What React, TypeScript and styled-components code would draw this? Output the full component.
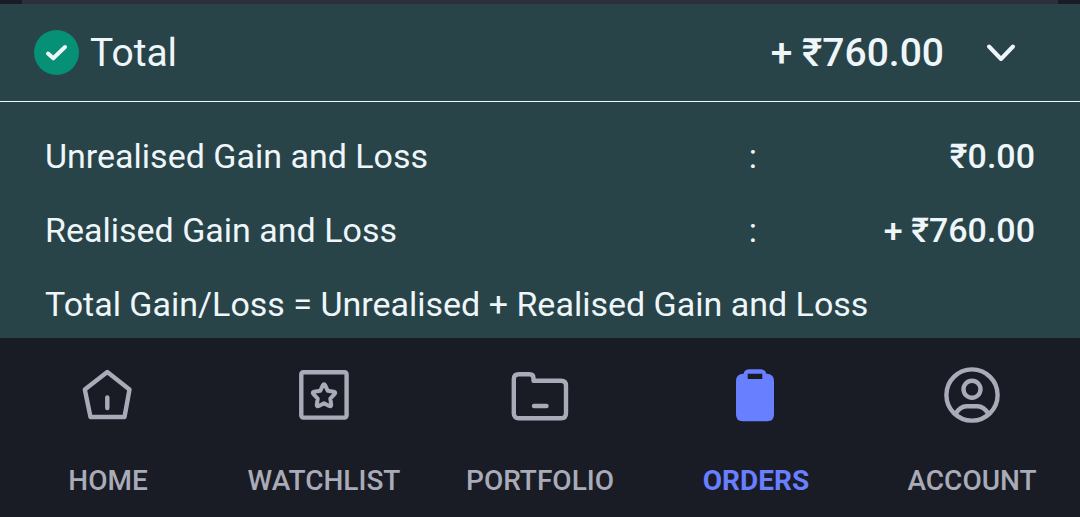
import React from "react";
import styled, { createGlobalStyle } from "styled-components";

const GlobalStyle = createGlobalStyle`
  *, *::before, *::after { box-sizing: border-box; }
  body {
    margin: 0;
    background: #191b25;
    font-family: Roboto, "Noto Sans", sans-serif;
    color: #eef6fa;
  }
`;

const Screen = styled.div`
  display: flex;
  flex-direction: column;
  min-height: 100vh;
`;

const CardEdge = styled.div`
  height: 4px;
  margin: 0 22px;
  background: #2d303c;
`;

const Summary = styled.section`
  background: #284448;
`;

const SummaryToggle = styled.button`
  display: flex;
  align-items: center;
  width: 100%;
  height: 98px;
  padding: 0 62px 0 34px;
  border: 0;
  border-bottom: 1px solid #eef6fa;
  background: transparent;
  color: inherit;
  font: inherit;
  font-size: 39px;
  line-height: 48px;
  text-align: left;
`;

const SummaryTitle = styled.span`
  flex: 1;
  margin-left: 11px;
`;

const SummaryAmount = styled.span`
  margin-right: 40px;
  font-weight: 500;
`;

const Breakdown = styled.div`
  padding: 17px 45px 0;
  height: 236px;
  font-size: 34px;
  line-height: 74px;
`;

const BreakdownList = styled.dl`
  margin: 0;
`;

const BreakdownRow = styled.div`
  display: grid;
  grid-template-columns: 1fr 278px;
`;

const Term = styled.dt`
  display: flex;
  justify-content: space-between;

  &::after { content: ":"; }
`;

const Amount = styled.dd`
  margin: 0;
  text-align: right;
  font-weight: 500;
`;

const Formula = styled.p`
  margin: 0;
`;

const TabBar = styled.nav`
  display: grid;
  grid-template-columns: repeat(5, 1fr);
  flex: 1;
  padding: 25px 0 19px;
  background: #191b25;
`;

const Tab = styled.a<{ $active?: boolean }>`
  display: flex;
  flex-direction: column;
  align-items: center;
  gap: 38px;
  color: ${(p) => (p.$active ? "#687fff" : "#a9acb8")};
  font-size: 28px;
  font-weight: ${(p) => (p.$active ? 700 : 500)};
  line-height: 32px;
  text-decoration: none;
`;

const TabIcon = styled.svg`
  display: block;
  width: 64px;
  height: 64px;
  fill: none;
  stroke: currentColor;
  stroke-width: 4.4;
  stroke-linecap: round;
  stroke-linejoin: round;
`;

const icons = {
  home: (
    <>
      <path d="M31.3 9 53.5 26.5 48.5 54h-34L8.8 26.5Z" />
      <path d="M31.3 34.5v10.5" />
    </>
  ),
  watchlist: (
    <>
      <rect x="9.3" y="9.3" width="45.3" height="45.3" rx="2" />
      <path
        strokeWidth="4"
        d="M30.8 22.3Q32 20.2 33.2 22.3L35.8 27.8 41.8 28.8Q44.2 29.3 42.5 31.2L38.3 35.6 39.2 41.6Q39.3 44 37.2 43L32 40.2 26.8 43Q24.7 44 24.8 41.6L25.7 35.6 21.5 31.2Q19.8 29.3 22.2 28.8L28.2 27.8Z"
      />
    </>
  ),
  portfolio: (
    <>
      <path d="M10.8 11.3H21.5Q25.5 11.3 25.5 15.3V17.8H53Q58 17.8 58 22.8V50.3Q58 55.3 53 55.3H10.8Q5.8 55.3 5.8 50.3V16.3Q5.8 11.3 10.8 11.3Z" />
      <path d="M26 43H38.5" />
    </>
  ),
  orders: (
    <path
      fill="currentColor"
      stroke="none"
      fillRule="evenodd"
      d="M25.5 6.3H36.5C40 6.3 42 8 42.3 10.8H43.5Q50 11.5 50 18V51.5Q50 58.3 43.2 58.3H18.8Q12 58.3 12 51.5V18Q12 11.5 18.5 10.8H19.7C20 8 22 6.3 25.5 6.3ZM23.7 10.8V16H38.3V10.8Z"
    />
  ),
  account: (
    <>
      <circle cx="32" cy="32" r="25.6" />
      <circle cx="32" cy="26.3" r="8.5" />
      <path d="M15.5 51C18.5 46 22 43.3 26.5 43.3H37.5C42 43.3 45.5 46 48.5 51" />
    </>
  ),
};

const tabs: { id: keyof typeof icons; label: string; active?: boolean }[] = [
  { id: "home", label: "HOME" },
  { id: "watchlist", label: "WATCHLIST" },
  { id: "portfolio", label: "PORTFOLIO" },
  { id: "orders", label: "ORDERS", active: true },
  { id: "account", label: "ACCOUNT" },
];

const gains = [
  { label: "Unrealised Gain and Loss", amount: "₹0.00" },
  { label: "Realised Gain and Loss", amount: "+ ₹760.00" },
];

export default function App() {
  return (
    <Screen>
      <GlobalStyle />
      <CardEdge />
      <Summary>
        <SummaryToggle type="button" aria-expanded="true" aria-controls="breakdown">
          <svg width="45" height="45" viewBox="0 0 45 45" fill="none" aria-hidden="true">
            <circle cx="22.5" cy="22.5" r="22.5" fill="#069076" />
            <path
              d="M14 23.5 19.3 28.3 31 17"
              stroke="#eef6fa"
              strokeWidth="4"
              strokeLinecap="round"
              strokeLinejoin="round"
            />
          </svg>
          <SummaryTitle>Total</SummaryTitle>
          <SummaryAmount>+ ₹760.00</SummaryAmount>
          <svg width="34" height="24" viewBox="0 0 34 24" fill="none" aria-hidden="true">
            <path
              d="M5 5.5 17 18 29 5.5"
              stroke="#eef6fa"
              strokeWidth="4"
              strokeLinecap="round"
              strokeLinejoin="round"
            />
          </svg>
        </SummaryToggle>
        <Breakdown id="breakdown">
          <BreakdownList>
            {gains.map((gain) => (
              <BreakdownRow key={gain.label}>
                <Term>{gain.label}</Term>
                <Amount>{gain.amount}</Amount>
              </BreakdownRow>
            ))}
          </BreakdownList>
          <Formula>Total Gain/Loss = Unrealised + Realised Gain and Loss</Formula>
        </Breakdown>
      </Summary>
      <TabBar aria-label="Main">
        {tabs.map((tab) => (
          <Tab
            key={tab.id}
            href={`#${tab.id}`}
            $active={tab.active}
            aria-current={tab.active ? "page" : undefined}
          >
            <TabIcon viewBox="0 0 64 64" aria-hidden="true">
              {icons[tab.id]}
            </TabIcon>
            {tab.label}
          </Tab>
        ))}
      </TabBar>
    </Screen>
  );
}
